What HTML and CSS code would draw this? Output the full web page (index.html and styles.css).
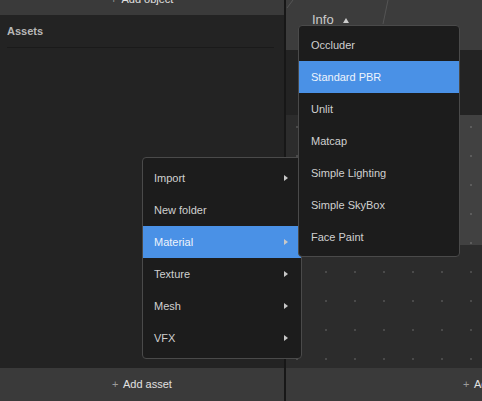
FILE: index.html
```html
<!DOCTYPE html>
<html lang="en">
<head>
  <meta charset="UTF-8" />
  <title>Assets</title>
  <link rel="stylesheet" href="styles.css">
</head>
<body>
  <div class="app">
    <!-- Assets panel -->
    <div class="left-panel">
      <div class="top-bar"><span class="plus">+</span> Add object</div>
      <div class="assets-header">Assets</div>
      <div class="assets-body"></div>
      <div class="bottom-bar"><span class="plus">+</span> Add asset</div>
    </div>

    <!-- Graph panel -->
    <div class="right-panel">
      <div class="info-bar">
        <span class="info-label">Info</span><span class="caret-up"></span>
        <svg class="info-lines" width="196" height="50" viewBox="0 0 196 50">
          <line x1="1" y1="8" x2="7" y2="0" stroke="#5a5a5a" stroke-width="0.8"/>
          <line x1="102" y1="0" x2="97" y2="24" stroke="#5a5a5a" stroke-width="0.8"/>
        </svg>
      </div>
      <div class="strip"></div>
      <div class="canvas">
        <div class="node"></div>
      </div>
      <div class="bottom-bar right"><span class="plus">+</span> Add object</div>
    </div>
  </div>

  <!-- Context menu -->
  <div class="menu context-menu">
    <div class="menu-item">Import <span class="arrow"></span></div>
    <div class="menu-item">New folder</div>
    <div class="menu-item active">Material <span class="arrow"></span></div>
    <div class="menu-item">Texture <span class="arrow"></span></div>
    <div class="menu-item">Mesh <span class="arrow"></span></div>
    <div class="menu-item">VFX <span class="arrow"></span></div>
  </div>

  <div class="menu submenu">
    <div class="menu-item">Occluder</div>
    <div class="menu-item active">Standard PBR</div>
    <div class="menu-item">Unlit</div>
    <div class="menu-item">Matcap</div>
    <div class="menu-item">Simple Lighting</div>
    <div class="menu-item">Simple SkyBox</div>
    <div class="menu-item">Face Paint</div>
  </div>
</body>
</html>
```

FILE: styles.css
```css
body {
  margin: 0;
  background: #232323;
  font-family: 'Liberation Sans', Arial, sans-serif;
  font-size: 11px;
  color: #d0d0d0;
  overflow: hidden;
}
.app {
  display: flex;
  height: 401px;
}
.left-panel {
  width: 284px;
  display: flex;
  flex-direction: column;
  background: #232323;
  border-right: 2px solid #171717;
}
.top-bar {
  height: 32px;
  margin-top: -17px;
  line-height: 32px;
  text-align: center;
  background: #3a3a3a;
  color: #e0e0e0;
}
.plus {
  color: #9a9a9a;
  margin-right: 2px;
}
.assets-header {
  height: 32px;
  line-height: 32px;
  margin: 0 10px 0 7px;
  border-bottom: 1px solid #1a1a1a;
  font-weight: bold;
  color: #b8b8b8;
}
.assets-body {
  flex: 1;
}
.bottom-bar {
  height: 33px;
  line-height: 33px;
  text-align: center;
  background: #3a3a3a;
  color: #e0e0e0;
}
.bottom-bar.right {
  text-align: left;
  padding-left: 177px;
  white-space: nowrap;
}
.right-panel {
  flex: 1;
  display: flex;
  flex-direction: column;
  overflow: hidden;
}
.info-bar {
  position: relative;
  height: 50px;
  line-height: 40px;
  padding-left: 26px;
  background: #3c3c3c;
  font-size: 13px;
  color: #cccccc;
}
.info-label {
  position: relative;
}
.caret-up {
  display: inline-block;
  margin-left: 9px;
  vertical-align: middle;
  border-left: 3px solid transparent;
  border-right: 3px solid transparent;
  border-bottom: 5px solid #cccccc;
}
.info-lines {
  position: absolute;
  left: 0;
  top: 0;
}
.strip {
  height: 65px;
  background: #232323;
}
.canvas {
  position: relative;
  flex: 1;
  background-color: #4a4a4a;
  background-image:
    linear-gradient(90deg, #2c2c2c 27px, transparent 27px),
    linear-gradient(#2c2c2c 27px, transparent 27px);
  background-size: 29px 29px;
  background-position: 12px 13px;
}
.node {
  position: absolute;
  left: 174px;
  top: 0;
  width: 60px;
  height: 130px;
  background: rgba(255, 255, 255, 0.1);
}
.menu {
  position: absolute;
  background: #1c1c1c;
  border: 1px solid #4a4a4a;
  border-radius: 4px;
  overflow: hidden;
}
.context-menu {
  left: 142px;
  top: 157px;
  width: 158px;
  padding: 4px 0;
}
.submenu {
  left: 298px;
  top: 25px;
  width: 160px;
  padding: 3px 0;
}
.menu-item {
  height: 32px;
  display: flex;
  align-items: center;
  justify-content: space-between;
  padding: 0 13px 0 11px;
  color: #d0d0d0;
}
.submenu .menu-item {
  padding-left: 12px;
}
.menu-item.active {
  background: #4a91e6;
  color: #eef4fc;
}
.arrow {
  width: 0;
  height: 0;
  border-top: 3px solid transparent;
  border-bottom: 3px solid transparent;
  border-left: 4px solid #c8c8c8;
}
```
